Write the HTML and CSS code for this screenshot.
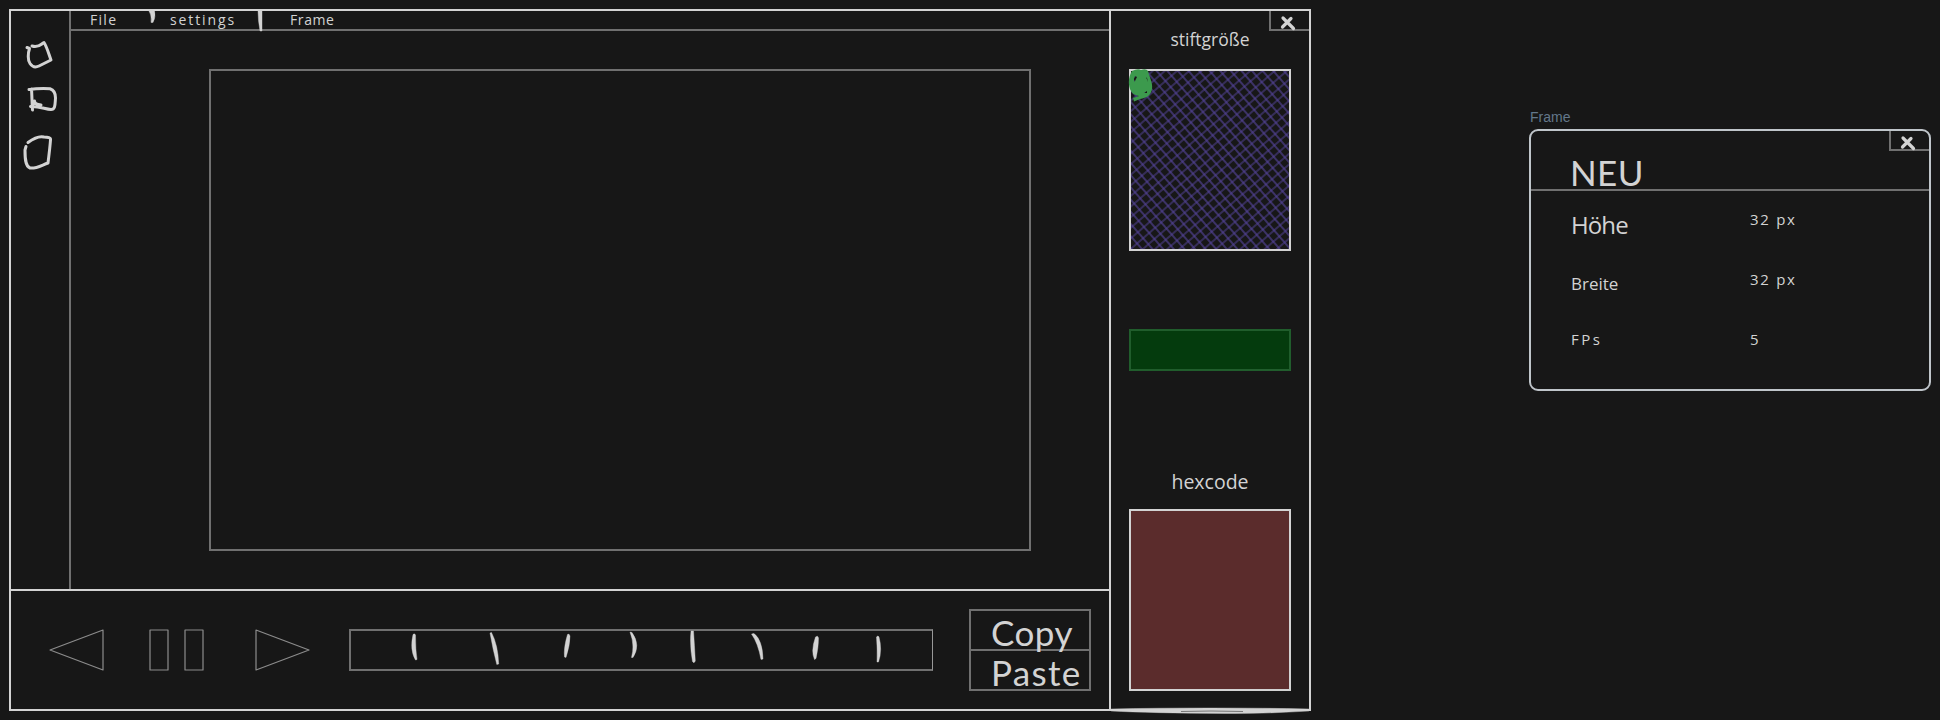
FILE: index.html
```html
<!DOCTYPE html>
<html lang="de">
<head>
<meta charset="utf-8">
<title>Pixel Editor</title>
<link rel="stylesheet" href="styles.css">
</head>
<body>
<main class="board">
  <section class="editor">
    <div class="workspace">
      <div class="stage">
        <aside class="tools">
          <svg class="tools-ink" viewBox="11 31 58 120" width="58" height="120">
            <g class="ink">
              <path d="M27 47.5L29.5 48.5C28 53 27.5 60 30 63.5C33 68 36 67.5 39 66L51 60C49 55 47 47 44 42.5C41 44 39 48 32 46"/>
              <path d="M29 89.5C36 88.500 46 88.500 50 88.700C54 90 55.500 94 55.500 98C55 104 55.500 109.500 51 109.500C45 109 39 106 30.500 106.500M31.500 89C32 96 32 104 32.500 110M34.500 101C35 104 37 104.500 41 105M34 102L32 106"/>
              <path d="M28 142.500C34 138 40 136 44 137C48 137 51 137.500 50.500 140C50 147 49 155 48 163C42 165 36 169 30 168C25 166 25 157 25 150L26 146.500"/>
            </g>
          </svg>
        </aside>
        <div class="main">
          <nav class="menu">
            <span class="menu-file">File</span>
            <span class="menu-settings">settings</span>
            <span class="menu-frame">Frame</span>
            <svg class="menu-ink" viewBox="71 11 1038 21" width="1038" height="21">
              <path class="blot" d="M149 11H154.500Q156 17 153 22.500H151Q152 15 149 11ZM258 11H262V31H260Q258 20 258 11Z"/>
            </svg>
          </nav>
          <div class="canvas-area"><div class="canvas"></div></div>
        </div>
      </div>
      <footer class="playback">
        <svg class="transport" viewBox="49 628 262 44" width="262" height="44">
          <g class="wire">
            <path d="M50 650L103 630V670Z"/>
            <path d="M150 630H168V670H150ZM185 630H203V670H185Z"/>
            <path d="M256 630L309 650L256 670Z"/>
          </g>
        </svg>
        <div class="timeline">
          <svg viewBox="351 631 580 38" width="580" height="38">
            <path class="blot" d="M413 634.500Q414.500 633 415.500 635Q415.500 650 417 659.500L415.500 660Q409.500 650 413 634.500Z
              M490 633L491.500 632.500Q498 645 498.700 664L496.800 664.500Q493 650 490 633Z
              M567.500 634.500Q569 633 570 636Q570 645 566 657.500L564.500 657Q563.500 648 567.500 634.500Z
              M630 632L632 632.500Q641 645 633 657.500L631.500 657.500Q635 645 630 632Z
              M691 631H693.500Q694.500 645 695.300 661Q694 664 692.500 661.500Q689.500 645 691 631Z
              M751.500 634L754 633.500Q762.500 640 763 659L761 659.500Q758 643 751.500 634Z
              M815.500 637Q818 635 818.500 638Q818.500 647 816 658.500L814.500 659.500Q810.500 651 815.500 637Z
              M876.500 637Q878 635 879 637Q882.500 650 878.500 662L877 662Q877.500 650 876.500 637Z"/>
          </svg>
        </div>
        <div class="actions">
          <div class="action"><span class="copy">Copy</span></div>
          <div class="action"><span class="paste">Paste</span></div>
        </div>
      </footer>
    </div>
    <aside class="panel">
      <div class="close">
        <svg viewBox="0 0 18 14" width="18" height="14"><path class="cross" d="M3 2L13.500 12.500M11 2.500L2.500 11"/></svg>
      </div>
      <div class="label pen-label"><span>stiftgröße</span></div>
      <div class="pen-box">
        <svg viewBox="1131 71 158 178" width="158" height="178">
          <defs><pattern id="hatch" width="8" height="8" patternUnits="userSpaceOnUse" patternTransform="translate(1132 73) rotate(-41)"><path class="hatch-line" d="M0 4H8M4 0V8"/></pattern></defs>
          <rect x="1131" y="71" width="158" height="178" fill="url(#hatch)"/>
          <path class="pen-blob" fill-rule="evenodd" d="M1132 71Q1138 68 1141 70Q1146 68 1148 71C1149 76 1153 83 1152 89C1151 95 1147 98 1140 99L1134 101.500L1133 98L1139 96C1134 95 1132 93 1131 91C1128 86 1128 77 1132 71ZM1135 76Q1133 79 1134.500 82L1137 77ZM1146 77L1148 82L1147 78ZM1147 91L1144 93L1147 93Z"/>
        </svg>
      </div>
      <div class="current-colour"></div>
      <div class="label hex-label"><span>hexcode</span></div>
      <div class="hex-box"></div>
      <svg class="panel-ink" viewBox="1111 706 200 10" width="200" height="10">
        <path class="blot" d="M1111 709Q1155 708 1210 708T1309 709V711Q1260 714 1225 713.500Q1150 713 1111 711Z"/>
        <path class="seam" d="M1181 711.500Q1210 710.500 1243 711.500"/>
      </svg>
    </aside>
  </section>

  <section class="dialog-wrap">
    <div class="frame-name">Frame</div>
    <div class="dialog">
      <header class="dialog-head">
        <h1>NEU</h1>
        <div class="close">
          <svg viewBox="0 0 18 14" width="18" height="14"><path class="cross" d="M3 2L13.500 12.500M11 2.500L2.500 11"/></svg>
        </div>
      </header>
      <dl class="fields">
        <dt class="height">Höhe</dt><dd class="v1">32 px</dd>
        <dt class="width">Breite</dt><dd class="v2">32 px</dd>
        <dt class="fps">FPs</dt><dd class="v3">5</dd>
      </dl>
    </div>
  </section>
</main>
</body>
</html>
```
FILE: styles.css
```css
* { box-sizing: border-box; margin: 0; padding: 0; }
body { background: #171717; color: #d3d3d3; font-family: Lato, "Open Sans", sans-serif; overflow: hidden; }
svg { display: block; overflow: visible; }
.board { display: flex; justify-content: space-between; align-items: flex-start; width: 1940px; height: 720px; padding: 9px 9px 0; background: #171717; }

.editor { display: flex; width: 1302px; height: 702px; border: 2px solid #d3d3d3; }
.workspace { width: 1098px; display: flex; flex-direction: column; }
.stage { display: flex; height: 578px; }
.tools { width: 60px; border-right: 2px solid #707070; padding-top: 20px; }
.main { flex: 1; }
.menu { position: relative; display: flex; height: 20px; border-bottom: 2px solid #707070; line-height: 17px; padding-left: 19px; white-space: nowrap; }
.menu span { font-family: "Open Sans", sans-serif; font-size: 14px; }
.menu .menu-file { width: 80px; letter-spacing: 1.3px; }
.menu .menu-settings { width: 120px; letter-spacing: 1.9px; }
.menu .menu-frame { letter-spacing: .6px; }
.menu-ink { position: absolute; left: 0; top: 0; }
.canvas-area { padding: 38px 0 0 138px; }
.canvas { width: 822px; height: 482px; border: 2px solid #707070; }

.playback { display: flex; height: 120px; border-top: 2px solid #d3d3d3; padding: 18px 18px 0 38px; }
.transport { margin-top: 19px; }
.timeline { width: 584px; height: 42px; margin: 20px 36px 0 38px; border: 2px solid #707070; border-right: 1px solid #989898; }
.actions { width: 122px; height: 82px; border: 2px solid #707070; font-size: 35px; }
.action { height: 38px; padding-left: 20px; line-height: 43px; white-space: nowrap; }
.action + .action { height: 40px; border-top: 2px solid #707070; line-height: 43px; }
.copy { letter-spacing: .5px; }
.paste { letter-spacing: 1.3px; }

.panel { position: relative; width: 200px; flex: none; border-left: 2px solid #d3d3d3; padding-left: 18px; }
.close { position: absolute; right: 0; top: 0; width: 40px; height: 20px; border-left: 2px solid #707070; border-bottom: 2px solid #707070; padding: 5px 0 0 9px; }
.label { width: 162px; text-align: center; white-space: nowrap; }
.pen-label { height: 58px; padding-top: 16px; font: 17.500px/24px "Open Sans", sans-serif; }
.pen-box { width: 162px; height: 182px; border: 2px solid #d3d3d3; }
.current-colour { width: 162px; height: 42px; margin-top: 78px; border: 2px solid #205d2c; background: #043b0d; }
.hex-label { height: 138px; padding-top: 98px; font: 19.500px/26px "Open Sans", sans-serif; }
.hex-box { width: 162px; height: 182px; border: 2px solid #d3d3d3; background: #5b2c2c; }
.panel-ink { position: absolute; left: 0; bottom: -7px; }

.dialog-wrap { width: 402px; padding-top: 98px; }
.frame-name { height: 22px; padding-left: 1px; font: 14px/20px "Liberation Sans", Arial, sans-serif; color: #63788b; }
.dialog { position: relative; height: 262px; border: 2px solid #bfc5ca; border-radius: 9px; }
.dialog-head { height: 60px; border-bottom: 2px solid #707070; padding: 19px 0 0 39px; }
.dialog-head h1 { font-size: 35px; font-weight: 400; line-height: 44px; letter-spacing: .4px; }
.fields { display: grid; grid-template-columns: 179px 1fr; grid-template-rows: 56px 60px 50px; padding-left: 40px; font: 15px/20px "Open Sans", sans-serif; white-space: nowrap; }
.height { font-size: 24px; line-height: 34px; padding-top: 17px; letter-spacing: -.9px; }
.v1 { padding-top: 18px; letter-spacing: 1.7px; }
.width { font-size: 17px; padding-top: 27px; }
.v2 { padding-top: 22px; letter-spacing: 1.7px; }
.fps { padding-top: 22px; letter-spacing: 2.5px; }
.v3 { padding-top: 22px; }

.ink path { fill: none; stroke: #d3d3d3; stroke-width: 3; stroke-linecap: round; stroke-linejoin: round; }
.blot { fill: #d3d3d3; stroke: #d3d3d3; stroke-width: .4; }
.wire path { fill: none; stroke: #8c8c8c; stroke-width: 1.2; stroke-linejoin: round; }
.cross { fill: none; stroke: #d3d3d3; stroke-width: 3.2; stroke-linecap: round; }
.hatch-line { fill: none; stroke: #54439a; stroke-width: 1.2; }
.pen-blob { fill: #3c9a4d; }
.panel-ink .seam { fill: none; stroke: #777; stroke-width: 1; }
```
